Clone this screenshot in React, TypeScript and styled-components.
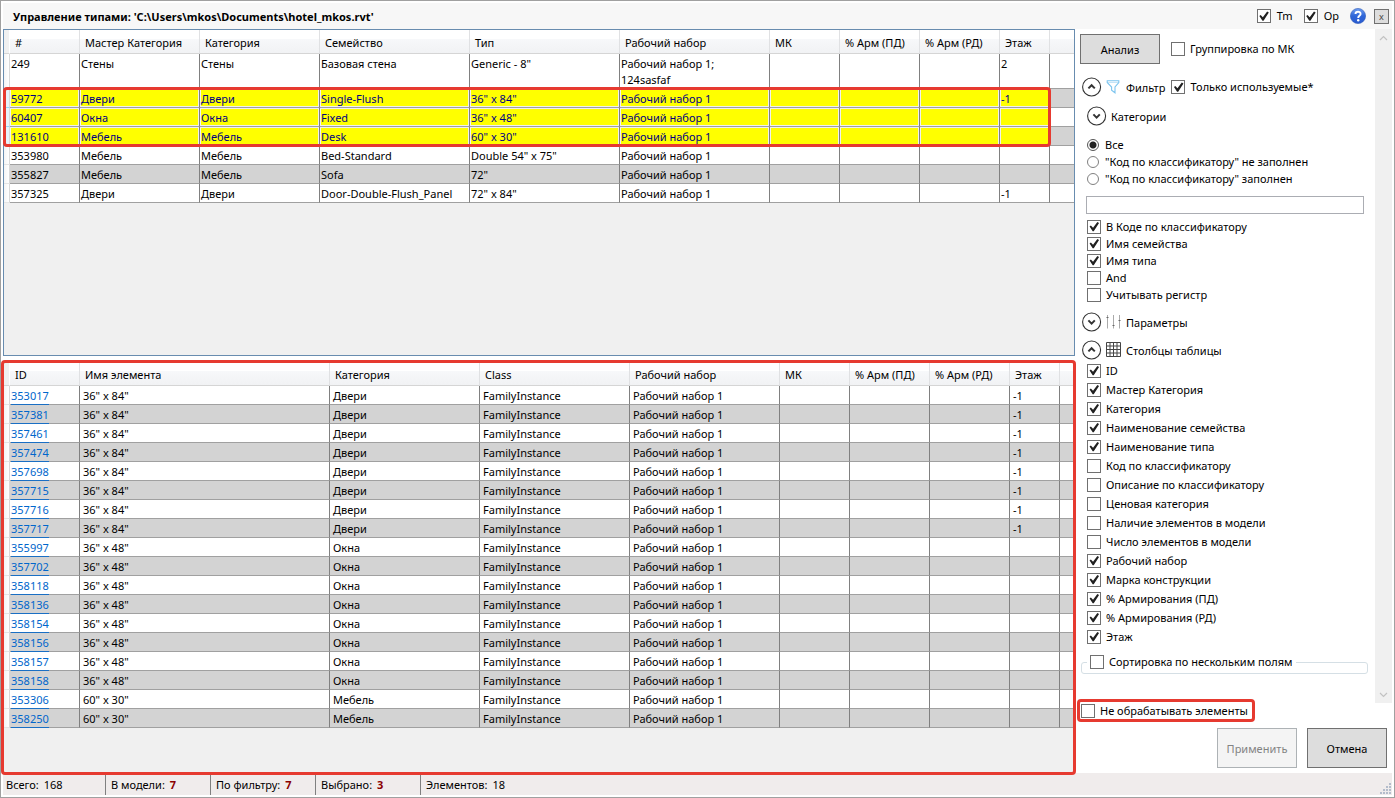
import React from "react";
import styled, { createGlobalStyle, css } from "styled-components";

const GlobalStyle = createGlobalStyle`
  *, *::before, *::after { box-sizing: border-box; }
  body {
    margin: 0;
    background: #fff;
    color: #000;
    font: 11px/16px "Noto Sans", "Open Sans", sans-serif;
  }
  button, input { font: inherit; color: inherit; margin: 0; }
`;

const highlight = "#e63a30";

const AppWindow = styled.div`
  display: flex;
  flex-direction: column;
  height: 100vh;
  min-height: 798px;
  padding: 2px;
  border: 1px solid #a0a0a0;
  background: #fff;
`;

const TitleBar = styled.header`
  display: flex;
  align-items: center;
  flex: none;
  height: 26px;
  padding: 0 3px 0 10px;
  background: #f7f7f7;
`;

const Title = styled.h1`
  flex: 1;
  margin: 0;
  padding-top: 1px;
  font-size: 11px;
  line-height: 16px;
  font-weight: 700;
  white-space: nowrap;
`;

const TitleTools = styled.div`
  display: flex;
  align-items: center;
  gap: 8px;
  label { gap: 6px; margin-right: 3px; }
`;

const IconButton = styled.button`
  display: flex;
  padding: 0;
  border: 0;
  background: none;
`;

const CloseButton = styled.button`
  width: 15px;
  height: 15px;
  padding: 0;
  border: 1px solid #707070;
  background: #ddd;
  color: #444;
  font-size: 9px;
  line-height: 11px;
`;

const Body = styled.main`
  display: grid;
  grid-template-columns: minmax(0, 1fr) 317px;
  flex: 1;
  min-height: 0;
`;

const Grids = styled.div`
  display: grid;
  grid-template-rows: 327fr 412fr;
  gap: 5px;
  min-height: 0;
`;

const GridPane = styled.section<{ $marked?: boolean }>`
  position: relative;
  min-height: 0;
  border: 1px solid #688caf;
  background: #f0f0f0;
  ${(p) =>
    p.$marked &&
    css`
      &::after {
        content: "";
        position: absolute;
        inset: -2px -2px -3px -3px;
        border: 3px solid ${highlight};
        border-radius: 4px;
        pointer-events: none;
      }
    `}
`;

const SelectionMark = styled.div`
  position: absolute;
  top: 57px;
  left: -1px;
  width: 1048px;
  height: 60px;
  border: 3px solid ${highlight};
  border-radius: 4px;
  pointer-events: none;
`;

const DataTable = styled.table`
  width: 100%;
  table-layout: fixed;
  border-collapse: separate;
  border-spacing: 0;
`;

const HeadCell = styled.th`
  height: 24px;
  padding: 5px 0 2px 5px;
  border-right: 1px solid #e0e1e3;
  border-bottom: 1px solid #d5d5d5;
  background: linear-gradient(#fff 0 40%, #f7f8fa 41%, #f1f2f4);
  font-weight: 400;
  text-align: left;
  white-space: nowrap;
  overflow: hidden;
  &:first-child { padding: 0; background: #f0f0f0; border-right-color: #fff; }
  &:last-child { border-right: 0; }
`;

const Cell = styled.td<{ $pad: number }>`
  padding: 2px 0 0 ${(p) => p.$pad}px;
  border-right: 1px solid #808080;
  border-bottom: 1px solid #a0a0a0;
  vertical-align: top;
  height: 19px;
  overflow: hidden;
  &:last-child { border-right: 0; }
`;

const RowHead = styled.td`
  padding: 0;
  border-right: 1px solid #d8d8d8;
  border-bottom: 1px solid #e4e4e4;
  background: linear-gradient(90deg, #f4f4f4, #fff);
`;

const Row = styled.tr<{ $selected?: boolean }>`
  background: #fff;
  &:nth-child(even) { background: #d3d3d3; }
  ${(p) =>
    p.$selected &&
    css`
      ${Cell}:not(:last-child) {
        background: #ff0;
        color: #000080;
        box-shadow: inset 0 0 0 1px #f0f0f0;
      }
      ${RowHead} {
        background: #e6f3fb;
        border-bottom-color: #9bd7f5;
      }
    `}
`;

const IdCell = styled(Cell)`
  overflow: visible;
`;

const IdLink = styled.a`
  display: block;
  width: max-content;
  height: 17px;
  margin-bottom: -1px;
  color: #0066cc;
  border-bottom: 1px solid #1a6fc4;
  text-decoration: none;
`;

const Side = styled.aside`
  display: flex;
  flex-direction: column;
  min-height: 0;
  background: #fff;
`;

const ScrollArea = styled.div`
  display: flex;
  flex: 1;
  min-height: 0;
`;

const Options = styled.div`
  flex: 1;
  min-width: 0;
  padding: 5px 7px 0 5px;
`;

const ScrollTrack = styled.div`
  display: flex;
  flex-direction: column;
  justify-content: space-between;
  align-items: center;
  width: 17px;
  padding: 6px 0 5px;
  background: #f0f0f0;
`;

const ActionRow = styled.div`
  display: flex;
  align-items: center;
  gap: 11px;
`;

const PushButton = styled.button<{ $tall?: boolean }>`
  width: 80px;
  height: ${(p) => (p.$tall ? 40 : 30)}px;
  padding: 2px 0 0;
  border: 1px solid #707070;
  background: #ddd;
  white-space: nowrap;
  &:disabled {
    border-color: #adb2b5;
    background: #f4f4f4;
    color: #838383;
  }
`;

const SectionHead = styled.div<{ $gap: number; $indent?: boolean }>`
  display: flex;
  align-items: center;
  gap: 4px;
  height: 20px;
  margin-top: ${(p) => p.$gap}px;
  padding-left: ${(p) => (p.$indent ? 7 : 2)}px;
`;

const SectionName = styled.span`
  padding: 2px 2px 0 0;
  white-space: nowrap;
`;

const CheckLabel = styled.label<{ $row?: number }>`
  display: flex;
  align-items: center;
  gap: 5px;
  width: max-content;
  height: ${(p) => p.$row ?? 16}px;
  white-space: nowrap;
`;

const CheckBox = styled.input.attrs({ type: "checkbox" })`
  appearance: none;
  display: block;
  flex: none;
  width: 14px;
  height: 14px;
  border: 1px solid #707070;
  background: #fff;
  &:checked::before {
    content: "";
    display: block;
    width: 12px;
    height: 12px;
    background: #212121;
    clip-path: polygon(13% 50%, 24% 42%, 42% 60%, 78% 12%, 92% 20%, 48% 90%, 39% 90%);
  }
`;

const RadioBox = styled.input.attrs({ type: "radio" })`
  appearance: none;
  flex: none;
  width: 12px;
  height: 12px;
  border: 1px solid #808080;
  border-radius: 50%;
  background: #fff;
  &:checked { border-color: #555; background: radial-gradient(circle, #212121 0 3px, #fff 4px); }
`;

const OptionList = styled.div<{ $gap: number; $wideGap?: boolean }>`
  margin-top: ${(p) => p.$gap}px;
  padding-left: 7px;
  label { gap: ${(p) => (p.$wideGap ? 6 : 5)}px; }
`;

const SearchBox = styled.input`
  display: block;
  width: calc(100% - 10px);
  height: 18px;
  margin: 9px 0 0 6px;
  padding: 0 2px;
  border: 1px solid #abadb3;
  background: #fff;
`;

const SortGroup = styled.fieldset`
  height: 20px;
  margin: 8px 0 0 1px;
  padding: 0 5px;
  border: 1px solid #d5dfe5;
  border-radius: 3px;
  legend { padding: 0 4px 0 3px; }
`;

const Footer = styled.div`
  display: flex;
  flex-direction: column;
  gap: 9px;
  padding: 0 5px 5px 6px;
`;

const MarkedOption = styled.div`
  position: relative;
  width: max-content;
  &::after {
    content: "";
    position: absolute;
    inset: -4px -7px -3px -4px;
    border: 3px solid ${highlight};
    border-radius: 4px;
    pointer-events: none;
  }
`;

const Buttons = styled.div`
  display: flex;
  justify-content: flex-end;
  gap: 10px;
`;

const StatusBar = styled.footer`
  display: flex;
  flex: none;
  height: 22px;
  padding-left: 3px;
  background: #f0ecec;
`;

const StatusItem = styled.div`
  display: flex;
  gap: 5px;
  width: 105px;
  padding: 4px 0 0 5px;
  white-space: nowrap;
  &:first-child { width: 99px; padding-left: 0; }
  & + & { border-left: 1px solid #808080; }
  strong { color: #8b0000; }
`;

const Grip = styled.svg`
  align-self: flex-end;
  margin-left: auto;
`;

const Check = ({ label, on, row }: { label: string; on?: boolean; row?: number }) => (
  <CheckLabel $row={row}>
    <CheckBox defaultChecked={on} />
    <span>{label}</span>
  </CheckLabel>
);

const Expander = ({ open, name }: { open?: boolean; name: string }) => (
  <IconButton aria-label={name} aria-expanded={!!open}>
    <svg width="20" height="20" viewBox="0 0 20 20" fill="none">
      <circle cx="9.6" cy="10" r="9" stroke="#333" strokeWidth="1.1" />
      <path d={open ? "M6.4 11.4 9.6 8.2l3.2 3.2" : "M6.4 8.4 9.6 11.6l3.2-3.2"} stroke="#333" strokeWidth="2" />
    </svg>
  </IconButton>
);

const FunnelIcon = () => (
  <svg width="16" height="16" viewBox="0 0 16 16" fill="none">
    <path d="M1.2 1.7h11.6v1.8L9 8v5.8L5.6 11.2V8L1.2 3.5z" stroke="#7cc4ee" strokeWidth="1.1" />
    <path d="M2 3.5h10" stroke="#c4e4f7" />
  </svg>
);

const SlidersIcon = () => (
  <svg width="16" height="16" viewBox="0 0 16 16" fill="none">
    <path d="M1.5 1v13.5M7.5 1v13.5M13.5 1v13.5" stroke="#aaa" />
    <path d="M0.5 3.5h2M6.5 11.5h2M12.5 6.5h2" stroke="#666" />
  </svg>
);

const TableIcon = () => (
  <svg width="16" height="16" viewBox="0 0 16 16" fill="none" stroke="#444">
    <path d="M.5.5h14v14H.5zM4 .5v14M7.5.5v14M11 .5v14M.5 4h14M.5 7.5h14M.5 11h14" />
  </svg>
);

const HelpIcon = () => (
  <svg width="16" height="16" viewBox="0 0 16 16">
    <defs>
      <linearGradient id="help" x1="0" y1="0" x2="0" y2="1">
        <stop offset="0" stopColor="#6f9df0" />
        <stop offset="0.5" stopColor="#2f66d8" />
        <stop offset="1" stopColor="#2a5bd0" />
      </linearGradient>
    </defs>
    <circle cx="8" cy="8" r="7.6" fill="url(#help)" stroke="#2b59b8" strokeWidth=".6" />
    <path d="M5.5 6.1C5.5 3 10.6 3 10.6 6c0 1.8-2.4 1.9-2.4 3.9" fill="none" stroke="#fff" strokeWidth="1.9" />
    <circle cx="8.2" cy="12.2" r="1.2" fill="#fff" />
  </svg>
);

const Arrow = ({ d }: { d: string }) => (
  <svg width="9" height="6" viewBox="0 0 9 6" fill="none">
    <path d={d} stroke="#c2c2c2" strokeWidth="1.2" />
  </svg>
);

type Column = { name: string; width: number };

const typeColumns: Column[] = [
  { name: "#", width: 70 },
  { name: "Мастер Категория", width: 120 },
  { name: "Категория", width: 120 },
  { name: "Семейство", width: 150 },
  { name: "Тип", width: 150 },
  { name: "Рабочий набор", width: 150 },
  { name: "МК", width: 70 },
  { name: "% Арм (ПД)", width: 80 },
  { name: "% Арм (РД)", width: 80 },
  { name: "Этаж", width: 50 },
];

const typeRows: { cells: string[]; selected?: boolean }[] = [
  { cells: ["249", "Стены", "Стены", "Базовая стена", 'Generic - 8"', "Рабочий набор 1;\n124sasfaf", "", "", "", "2"] },
  { cells: ["59772", "Двери", "Двери", "Single-Flush", '36" x 84"', "Рабочий набор 1", "", "", "", "-1"], selected: true },
  { cells: ["60407", "Окна", "Окна", "Fixed", '36" x 48"', "Рабочий набор 1", "", "", "", ""], selected: true },
  { cells: ["131610", "Мебель", "Мебель", "Desk", '60" x 30"', "Рабочий набор 1", "", "", "", ""], selected: true },
  { cells: ["353980", "Мебель", "Мебель", "Bed-Standard", 'Double 54" x 75"', "Рабочий набор 1", "", "", "", ""] },
  { cells: ["355827", "Мебель", "Мебель", "Sofa", '72"', "Рабочий набор 1", "", "", "", ""] },
  { cells: ["357325", "Двери", "Двери", "Door-Double-Flush_Panel", '72" x 84"', "Рабочий набор 1", "", "", "", "-1"] },
];

const elementColumns: Column[] = [
  { name: "ID", width: 70 },
  { name: "Имя элемента", width: 250 },
  { name: "Категория", width: 150 },
  { name: "Class", width: 150 },
  { name: "Рабочий набор", width: 150 },
  { name: "МК", width: 70 },
  { name: "% Арм (ПД)", width: 80 },
  { name: "% Арм (РД)", width: 80 },
  { name: "Этаж", width: 50 },
];

const elementGroups = [
  { size: '36" x 84"', category: "Двери", floor: "-1", ids: [353017, 357381, 357461, 357474, 357698, 357715, 357716, 357717] },
  { size: '36" x 48"', category: "Окна", floor: "", ids: [355997, 357702, 358118, 358136, 358154, 358156, 358157, 358158] },
  { size: '60" x 30"', category: "Мебель", floor: "", ids: [353306, 358250] },
];

const elementRows = elementGroups.flatMap((g) =>
  g.ids.map((id) => ({
    id,
    cells: [g.size, g.category, "FamilyInstance", "Рабочий набор 1", "", "", "", g.floor],
  }))
);

const tableColumns: [string, boolean][] = [
  ["ID", true],
  ["Мастер Категория", true],
  ["Категория", true],
  ["Наименование семейства", true],
  ["Наименование типа", true],
  ["Код по классификатору", false],
  ["Описание по классификатору", false],
  ["Ценовая категория", false],
  ["Наличие элементов в модели", false],
  ["Число элементов в модели", false],
  ["Рабочий набор", true],
  ["Марка конструкции", true],
  ["% Армирования (ПД)", true],
  ["% Армирования (РД)", true],
  ["Этаж", true],
];

const searchOptions: [string, boolean][] = [
  ["В Коде по классификатору", true],
  ["Имя семейства", true],
  ["Имя типа", true],
  ["And", false],
  ["Учитывать регистр", false],
];

const codeModes = ["Все", '"Код по классификатору" не заполнен', '"Код по классификатору" заполнен'];

const CellText = styled.span`
  white-space: pre-line;
`;

const TableHead = ({ columns }: { columns: Column[] }) => (
  <>
    <colgroup>
      <col width={6} />
      {columns.map((c) => (
        <col key={c.name} width={c.width} />
      ))}
      <col />
    </colgroup>
    <thead>
      <tr>
        <HeadCell />
        {columns.map((c) => (
          <HeadCell key={c.name}>{c.name}</HeadCell>
        ))}
        <HeadCell />
      </tr>
    </thead>
  </>
);

export default function App() {
  return (
    <AppWindow>
      <GlobalStyle />
      <TitleBar>
        <Title>Управление типами: 'C:\Users\mkos\Documents\hotel_mkos.rvt'</Title>
        <TitleTools>
          <Check label="Tm" on />
          <Check label="Op" on />
          <IconButton aria-label="Справка">
            <HelpIcon />
          </IconButton>
          <CloseButton>x</CloseButton>
        </TitleTools>
      </TitleBar>

      <Body>
        <Grids>
          <GridPane>
            <DataTable>
              <TableHead columns={typeColumns} />
              <tbody>
                {typeRows.map((r) => (
                  <Row key={r.cells[0]} $selected={r.selected}>
                    <RowHead />
                    {r.cells.map((text, i) => (
                      <Cell key={i} $pad={1}>
                        <CellText>{text}</CellText>
                      </Cell>
                    ))}
                    <Cell $pad={1} />
                  </Row>
                ))}
              </tbody>
            </DataTable>
            <SelectionMark />
          </GridPane>

          <GridPane $marked>
            <DataTable>
              <TableHead columns={elementColumns} />
              <tbody>
                {elementRows.map((r) => (
                  <Row key={r.id}>
                    <RowHead />
                    <IdCell $pad={1}>
                      <IdLink href={`#${r.id}`}>{r.id}</IdLink>
                    </IdCell>
                    {r.cells.map((text, i) => (
                      <Cell key={i} $pad={3}>{text}</Cell>
                    ))}
                    <Cell $pad={3} />
                  </Row>
                ))}
              </tbody>
            </DataTable>
          </GridPane>
        </Grids>

        <Side>
          <ScrollArea>
            <Options>
              <ActionRow>
                <PushButton>Анализ</PushButton>
                <Check label="Группировка по МК" />
              </ActionRow>

              <SectionHead $gap={13}>
                <Expander open name="Фильтр" />
                <FunnelIcon />
                <SectionName>Фильтр</SectionName>
                <Check label="Только используемые*" on row={18} />
              </SectionHead>
              <SectionHead $gap={9} $indent>
                <Expander name="Категории" />
                <SectionName>Категории</SectionName>
              </SectionHead>

              <OptionList $gap={10} $wideGap>
                {codeModes.map((m, i) => (
                  <CheckLabel key={m} $row={17}>
                    <RadioBox name="code" defaultChecked={i === 0} />
                    <span>{m}</span>
                  </CheckLabel>
                ))}
              </OptionList>
              <SearchBox type="text" aria-label="Поиск" />
              <OptionList $gap={4}>
                {searchOptions.map(([name, on]) => (
                  <Check key={name} label={name} on={on} row={17} />
                ))}
              </OptionList>

              <SectionHead $gap={9}>
                <Expander name="Параметры" />
                <SlidersIcon />
                <SectionName>Параметры</SectionName>
              </SectionHead>
              <SectionHead $gap={8}>
                <Expander open name="Столбцы таблицы" />
                <TableIcon />
                <SectionName>Столбцы таблицы</SectionName>
              </SectionHead>
              <OptionList $gap={1}>
                {tableColumns.map(([name, on]) => (
                  <Check key={name} label={name} on={on} row={19} />
                ))}
              </OptionList>

              <SortGroup>
                <legend>
                  <Check label="Сортировка по нескольким полям" />
                </legend>
              </SortGroup>
            </Options>
            <ScrollTrack aria-hidden="true">
              <Arrow d="M1 5 4.5 1.5 8 5" />
              <Arrow d="M1 1 4.5 4.5 8 1" />
            </ScrollTrack>
          </ScrollArea>

          <Footer>
            <MarkedOption>
              <Check label="Не обрабатывать элементы" />
            </MarkedOption>
            <Buttons>
              <PushButton $tall disabled>Применить</PushButton>
              <PushButton $tall>Отмена</PushButton>
            </Buttons>
          </Footer>
        </Side>
      </Body>

      <StatusBar>
        <StatusItem>Всего: <span>168</span></StatusItem>
        <StatusItem>В модели: <strong>7</strong></StatusItem>
        <StatusItem>По фильтру: <strong>7</strong></StatusItem>
        <StatusItem>Выбрано: <strong>3</strong></StatusItem>
        <StatusItem>Элементов: <span>18</span></StatusItem>
        <Grip width="12" height="12" viewBox="0 0 12 12" fill="#b4bccb">
          <path d="M9 0h2v2H9zM6 3h2v2H6zM9 3h2v2H9zM3 6h2v2H3zM6 6h2v2H6zM9 6h2v2H9zM0 9h2v2H0zM3 9h2v2H3zM6 9h2v2H6zM9 9h2v2H9z" />
        </Grip>
      </StatusBar>
    </AppWindow>
  );
}
